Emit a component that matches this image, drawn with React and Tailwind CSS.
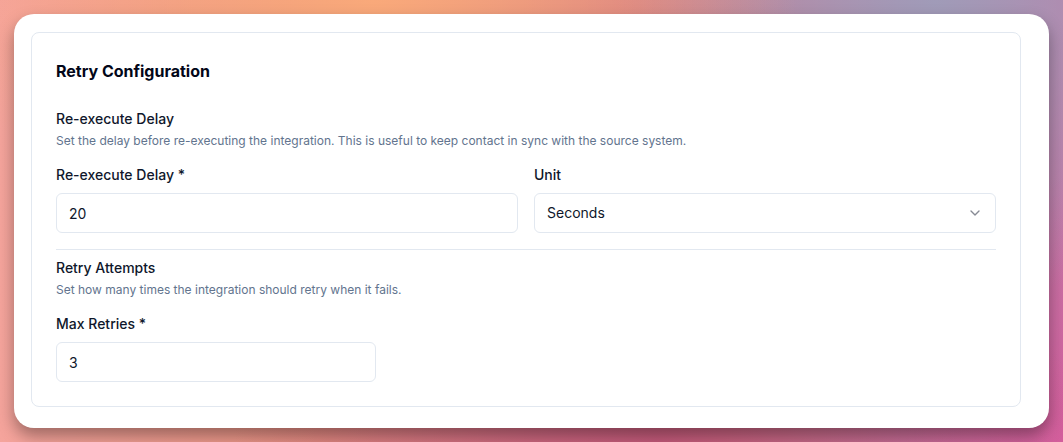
import { ChevronDown } from 'lucide-react';

const UNITS = ['Seconds', 'Minutes', 'Hours'];

function Field({ label, children, className = '' }) {
  return (
    <div className={`flex flex-col ${className}`}>
      <label className="text-sm font-medium leading-5 text-slate-900">{label}</label>
      <div className="mt-2">{children}</div>
    </div>
  );
}

function TextInput({ value }) {
  return (
    <input
      defaultValue={value}
      className="h-10 w-full rounded-md border border-slate-200 bg-white px-3 text-sm text-slate-900 outline-none"
    />
  );
}

function SectionHead({ title, hint }) {
  return (
    <div>
      <h3 className="text-sm font-medium leading-5 text-slate-900">{title}</h3>
      <p className="mt-1 text-xs leading-4 text-slate-500">{hint}</p>
    </div>
  );
}

export default function App() {
  return (
    <div
      className="h-[442px] w-full overflow-hidden bg-[radial-gradient(ellipse_40%_60%_at_35%_0%,#f9a97a,transparent),radial-gradient(ellipse_30%_70%_at_88%_0%,#a09bb8,transparent),radial-gradient(ellipse_40%_60%_at_62%_100%,#c45a7a,transparent),radial-gradient(ellipse_25%_60%_at_100%_100%,#d45e9e,transparent),linear-gradient(90deg,#f5a49c_0%,#e89282_30%,#d27a86_60%,#b884a8_85%,#c478a6_100%)] p-[14px] font-['Inter','Noto_Sans',sans-serif]"
    >
      <div className="h-[414px] w-[1035px] rounded-[20px] bg-white pb-[21px] pl-[17px] pr-[28px] pt-[18px] shadow-[0_8px_16px_rgba(0,0,0,0.35)]">
        <div className="h-full rounded-lg border border-slate-200 bg-white p-6">
          <h2 className="text-base font-bold leading-7 text-slate-950">Retry Configuration</h2>

          <div className="mt-6">
            <SectionHead
              title="Re-execute Delay"
              hint="Set the delay before re-executing the integration. This is useful to keep contact in sync with the source system."
            />
            <div className="mt-4 grid grid-cols-2 gap-4">
              <Field label="Re-execute Delay *">
                <TextInput value="20" />
              </Field>
              <Field label="Unit">
                <div className="flex h-10 w-full items-center justify-between rounded-md border border-slate-200 bg-white px-3 text-sm text-slate-900">
                  <span>{UNITS[0]}</span>
                  <ChevronDown className="h-4 w-4 text-slate-900 opacity-50" />
                </div>
              </Field>
            </div>
          </div>

          <div className="mt-4 h-px w-full bg-slate-200" />

          <div className="mt-2">
            <SectionHead
              title="Retry Attempts"
              hint="Set how many times the integration should retry when it fails."
            />
            <Field label="Max Retries *" className="mt-4 w-80">
              <TextInput value="3" />
            </Field>
          </div>
        </div>
      </div>
    </div>
  );
}
